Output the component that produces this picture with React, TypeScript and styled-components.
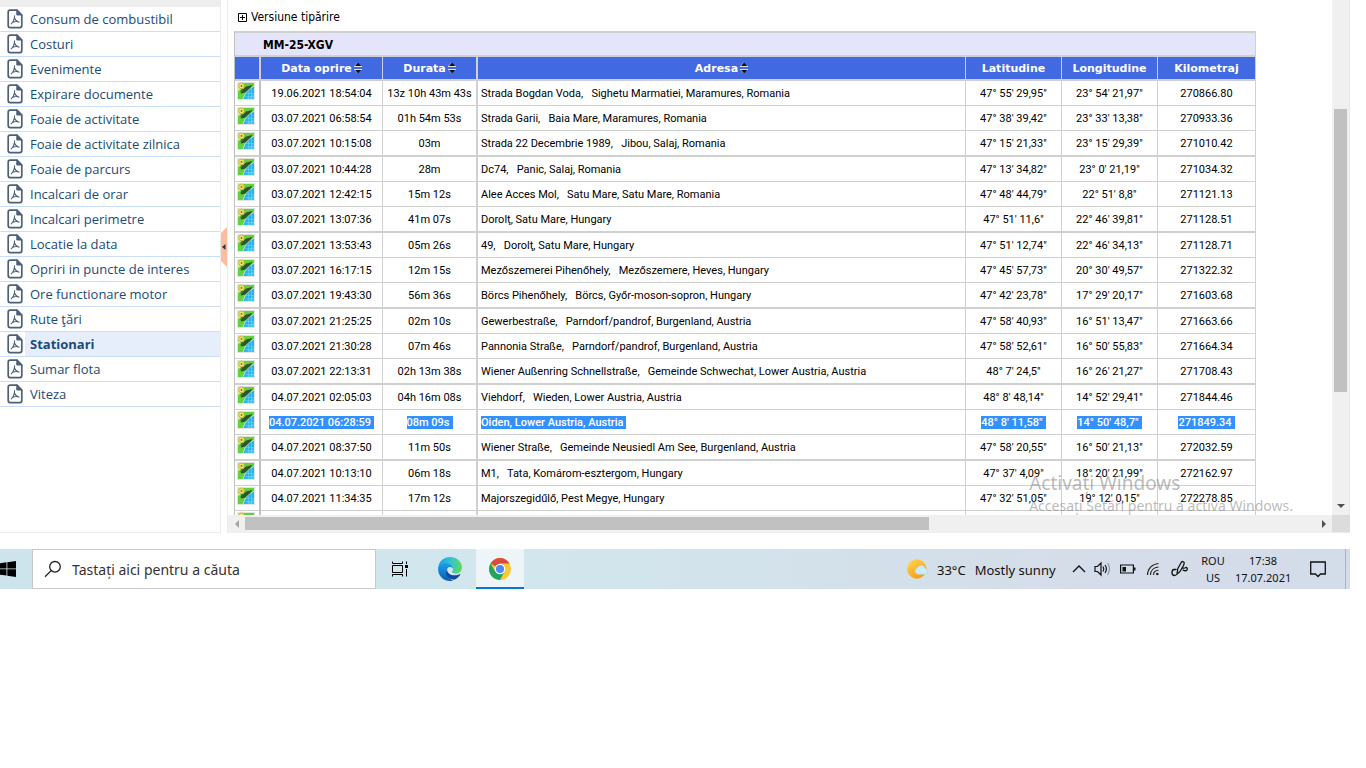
import React from "react";
import styled, { createGlobalStyle, css } from "styled-components";

const tableFont = 'Roboto, "DejaVu Sans Condensed", "Noto Sans", sans-serif';
const labelFont = '"DejaVu Sans Condensed", "DejaVu Sans", "Noto Sans", sans-serif';
const uiFont = '"Noto Sans", "Open Sans", sans-serif';

const GlobalStyle = createGlobalStyle`
  * { box-sizing: border-box; }
  body { margin: 0; background: #fff; font-family: ${labelFont}; color: #000; }
  button { border: 0; padding: 0; background: none; font: inherit; color: inherit; cursor: pointer; }
`;

const Screen = styled.div`
  margin-right: 16px;
  min-width: 1000px;
`;

const Workspace = styled.div`
  position: relative;
  display: flex;
  height: calc(100vh - 235px);
  min-height: 420px;
`;

const Sidebar = styled.nav`
  flex: 0 0 221px;
  border-right: 1px solid #ececec;
  border-bottom: 1px solid #ececec;
  overflow: hidden;
`;

const SidebarCap = styled.div`
  height: 7px;
  background: #eee;
`;

const ReportList = styled.ul`
  list-style: none;
  margin: 0;
  padding: 0;
`;

const ReportItem = styled.li`
  border-bottom: 1px solid #c9defa;
`;

const ReportLink = styled.a<{ $active?: boolean }>`
  display: flex;
  align-items: center;
  height: 24px;
  padding-left: 7px;
  color: #1c4b75;
  font: 13px/24px "Open Sans", "Noto Sans", sans-serif;
  text-decoration: none;
  ${(p) => p.$active && css`
    font-weight: 700;
    background: linear-gradient(to right, #fff 25px, #e6eefb 25px);
  `}
  svg { flex: none; margin-right: 7px; }
`;

const Splitter = styled.div`
  flex: 0 0 6px;
  display: flex;
  align-items: center;
  padding-bottom: 40px;
`;

const CollapseButton = styled.button`
  width: 6px;
  height: 40px;
  display: block;
  svg { display: block; }
`;

const Main = styled.main`
  flex: 1;
  min-width: 0;
  display: grid;
  grid-template-columns: minmax(0, 1fr) 18px;
  grid-template-rows: minmax(0, 1fr) 18px;
  border-left: 1px solid #ececec;
`;

const Report = styled.section`
  overflow: hidden;
  padding: 10px 76px 0 6px;
`;

const PrintToggle = styled.button`
  display: flex;
  align-items: center;
  gap: 4px;
  height: 14px;
  margin: 0 0 7px 4px;
  font: 12px/14px ${labelFont};
`;

const Table = styled.table`
  width: 100%;
  table-layout: fixed;
  border-collapse: separate;
  border-spacing: 0;
  border-top: 2px solid #d0d0d0;
  border-left: 1px solid #c0c0c0;
  font: 11px/14px ${tableFont};
`;

const Col = styled.col<{ $w?: number }>`
  ${(p) => p.$w && `width: ${p.$w}px;`}
`;

const VehicleCell = styled.th`
  height: 24px;
  padding: 1px 0 0 28px;
  text-align: left;
  font: 700 12px/20px ${labelFont};
  background: #e4e4fa;
  border-right: 1px solid #d0d0d0;
  border-bottom: 2px solid #d0d0d0;
`;

const HeadCell = styled.th<{ $thick?: boolean }>`
  height: 24px;
  padding: 2px 0 0;
  background: #4169e1;
  color: #fff;
  font: 700 11px/14px "DejaVu Sans", sans-serif;
  border-right: ${(p) => (p.$thick ? 2 : 1)}px solid #d0d0d0;
  border-bottom: 2px solid #d0d0d0;
`;

const SortButton = styled.button`
  display: inline-flex;
  align-items: flex-start;
  gap: 2px;
  height: 14px;
  vertical-align: top;
`;

const Cell = styled.td<{ $thick?: boolean; $left?: boolean }>`
  padding: ${(p) => (p.$left ? "2px 0 0 3px" : "2px 0 0")};
  text-align: ${(p) => (p.$left ? "left" : "center")};
  white-space: pre;
  overflow: hidden;
  border-right: ${(p) => (p.$thick ? 2 : 1)}px solid #d0d0d0;
  border-bottom: 1px solid #d0d0d0;
`;

const MapCell = styled(Cell)`
  vertical-align: top;
  padding: 1px 0 0 2px;
  text-align: left;
  border-right-color: #c0c0c0;
`;

const Row = styled.tr`
  height: 25px;
  &:nth-child(3n) { height: 26px; }
  &:nth-child(3n) td { border-bottom-width: 2px; }
`;

const MapButton = styled.button`
  display: block;
  width: 18px;
  height: 18px;
  svg { display: block; }
`;

const Value = styled.span<{ $selected?: boolean }>`
  ${(p) => p.$selected && css`
    display: inline-block;
    height: 13px;
    line-height: 14px;
    padding-right: 3px;
    background: #3390ff;
    color: #fff;
    font-weight: 500;
    vertical-align: top;
  `}
`;

const VerticalBar = styled.div`
  display: flex;
  flex-direction: column;
  align-items: center;
  background: #f0f0f0;
  border-right: 1px solid #e8e8e8;
`;

const VerticalThumb = styled.div`
  width: 13px;
  height: 55%;
  margin: 109px 0 auto;
  background: #c1c1c1;
`;

const HorizontalBar = styled.div`
  display: flex;
  align-items: center;
  background: #f0f0f0;
  padding-bottom: 1px;
`;

const HorizontalThumb = styled.div`
  width: 62%;
  height: 13px;
  margin-right: auto;
  background: #c1c1c1;
`;

const ScrollArrow = styled.button`
  flex: none;
  width: 17px;
  height: 18px;
  display: grid;
  place-items: center;
`;

const Corner = styled.div`
  background: #dcdcdc;
  border-bottom: 1px solid #ececec;
`;

const Watermark = styled.div`
  position: absolute;
  right: 57px;
  bottom: 17px;
  color: rgba(120, 120, 120, 0.5);
  font-family: ${uiFont};
  pointer-events: none;
`;

const WatermarkTitle = styled.div`
  font-size: 19px;
  line-height: 26px;
`;

const WatermarkText = styled.div`
  font-size: 14px;
  line-height: 20px;
`;

const Taskbar = styled.footer`
  display: flex;
  height: 40px;
  margin-top: 16px;
  background: linear-gradient(to right, #cde4ec, #d2e6ed 40%, #d3e0ea 65%, #d6dce9 85%, #d3dce9);
  font-family: ${uiFont};
`;

const StartButton = styled.button`
  width: 32px;
  display: flex;
  align-items: center;
`;

const SearchBox = styled.label`
  display: flex;
  align-items: center;
  width: 344px;
  padding-left: 11px;
  background: #fff;
  border: 1px solid #c8c8c8;
`;

const SearchInput = styled.input`
  flex: 1;
  min-width: 0;
  margin-left: 10px;
  padding: 2px 0 0;
  border: 0;
  outline: 0;
  background: none;
  font: 14px/20px ${uiFont};
  &::placeholder { color: #333; opacity: 1; }
`;

const TaskButton = styled.button<{ $active?: boolean; $w?: number }>`
  width: ${(p) => p.$w ?? 48}px;
  display: grid;
  place-items: center;
  ${(p) => p.$active && css`
    background: #edf5f9;
    box-shadow: inset 0 -2px #0078d7;
  `}
`;

const Tray = styled.div`
  display: flex;
  align-items: center;
  margin-left: auto;
  color: #111;
`;

const Weather = styled.button`
  display: flex;
  align-items: center;
  gap: 9px;
  width: 162px;
  font-size: 13px;
  line-height: 20px;
  white-space: nowrap;
`;

const WeatherText = styled.span`
  padding-top: 2px;
`;

const TrayButton = styled.button<{ $w: number }>`
  width: ${(p) => p.$w}px;
  display: grid;
  place-items: center;
  text-align: center;
  font-size: 11px;
  line-height: 17px;
`;

const ShowDesktop = styled.button`
  align-self: stretch;
  width: 5px;
  border-left: 1px solid #a8b2c0;
`;

const PdfIcon = () => (
  <svg width="16" height="20" viewBox="0 0 16 20" fill="none" stroke="#4d6076" strokeLinecap="round" strokeLinejoin="round" aria-hidden="true">
    <path d="M10 1.2H3.2Q1.2 1.2 1.2 3.2V16.6Q1.2 18.6 3.2 18.6H12.8Q14.8 18.6 14.8 16.6V6Z" strokeWidth="1.7" />
    <path d="M9.8 1.2V6H14.8Z" fill="#4d6076" strokeWidth="1" />
    <path d="M7.6 6.8C7.5 10 6.800 12.600 4.200 14.800M7.600 9.200C8.200 11.200 9.400 12.400 12 13.200M5.800 13.200C7.800 12.300 9.800 12.200 12 13" strokeWidth="1.1" />
  </svg>
);

const MapIcon = () => (
  <svg width="18" height="18" viewBox="0 0 18 18" aria-hidden="true">
    <rect width="18" height="18" fill="#e2e4e2" />
    <rect x="1" y="1" width="16" height="16" fill="#62d13c" />
    <path d="M17 4 12.500 7 8.500 11 6 17H17Z" fill="#27b1ee" />
    <path d="M8 17H17V12Z" fill="#3cc3f5" />
    <path d="M15.500 3 9 4.500 3.500 9 4 11.500 9 10.500 13 7Z" fill="#2c5a2c" />
    <path d="M17 4 12.500 7 8.500 11 6 17" fill="none" stroke="#c8f5f0" strokeWidth=".8" />
    <path d="M9.500 11.500H17M8.500 14.500H17M11.500 9V17M14.500 6.500V17" stroke="#6fd4fa" strokeWidth=".6" />
    <path d="M1 1H7V6L1 9Z" fill="#d5e89a" />
    <path d="M4.500 6.500V9.500" stroke="#6d6c24" strokeWidth="1.200" />
    <circle cx="4.500" cy="3.900" r="2.900" fill="#eee56a" stroke="#b5ac3c" strokeWidth=".8" />
    <circle cx="4.500" cy="3.900" r=".9" fill="#77701a" />
  </svg>
);

const SortIcon = () => (
  <svg width="8" height="12" viewBox="0 0 8 12" aria-hidden="true">
    <path d="M4 .5 7 4H1ZM4 11.500 1 8H7Z" fill="#111" />
    <path d="M0 4.500H8M0 7.500H8" stroke="#e4e0d4" />
    <path d="M3.500 .5 .5 4M.8 8 3.600 11.300" stroke="#cfcabc" strokeWidth=".6" />
  </svg>
);

const PlusBox = () => (
  <svg width="9" height="9" viewBox="0 0 9 9" fill="none" stroke="#000" aria-hidden="true">
    <path d="M.5.5H8.5V8.5H.5ZM2 4.5H7M4.5 2V7" />
  </svg>
);

const Triangle = ({ d, color = "#505050" }: { d: string; color?: string }) => (
  <svg width="8" height="8" viewBox="0 0 8 8" aria-hidden="true"><path d={d} fill={color} /></svg>
);

const WindowsLogo = () => (
  <svg width="16" height="16" viewBox="0 0 16 16" aria-hidden="true">
    <path d="M0 2.2 6.5 1.3V7.5H0ZM7.3 1.2 16 0V7.5H7.3ZM0 8.3H6.5V14.6L0 13.7ZM7.3 8.3H16V16L7.3 14.7Z" />
  </svg>
);

const SearchIcon = () => (
  <svg width="18" height="18" viewBox="0 0 18 18" fill="none" stroke="#222" strokeWidth="1.3" aria-hidden="true">
    <circle cx="11" cy="6.8" r="5.3" /><path d="M7.2 10.6 1 16.8" />
  </svg>
);

const TaskViewIcon = () => (
  <svg width="18" height="16" viewBox="0 0 18 16" fill="none" stroke="#000" aria-hidden="true">
    <path d="M1.5.5V2.5H11.5V.5M1.5 15.5V13.5H11.5V15.5M1.5 4.5H11.5V11.5H1.5ZM15.5.5V3M15.5 8V15.5" />
    <path d="M14 4H17V7H14Z" fill="#000" stroke="none" />
  </svg>
);

const EdgeIcon = () => (
  <svg width="24" height="24" viewBox="0 0 24 24" aria-hidden="true">
    <defs>
      <linearGradient id="edgeTop" x1="0" y1=".4" x2="1" y2=".5"><stop stopColor="#1e9fe0" /><stop offset=".55" stopColor="#35c6cf" /><stop offset="1" stopColor="#62d957" /></linearGradient>
      <linearGradient id="edgeLeft" x1="0" y1="0" x2="0" y2="1"><stop stopColor="#1ca0e5" /><stop offset="1" stopColor="#0a5cb6" /></linearGradient>
    </defs>
    <path d="M.3 10.2C1.1 4.2 6 0 12 0c7 0 12 5 12 10.500 0 3.500-2.500 6-6 6-2.500 0-4-.8-4-1.600 0-.6 1-1.100 1-3C15 9 12.400 7 9 7 5 7 1.200 9.200.3 12Z" fill="url(#edgeTop)" />
    <path d="M.1 12C.2 8.500 4 6.300 8 6.300c4 0 7 2.300 7 5.400-.6-1-1.700-1.700-3-1.700-4 0-6 8.500 3 13.700C7.500 25.300 0 20 .1 12Z" fill="url(#edgeLeft)" />
    <path d="M9 12.500C6.500 17.500 10 22 16 22.800c2.500-.9 5-2.900 6.200-5 .3-.6-.2-.9-.7-.6C15 20 9.500 17.500 9 12.500Z" fill="#11489b" />
  </svg>
);

const ChromeIcon = () => (
  <svg width="24" height="24" viewBox="0 0 24 24" aria-hidden="true">
    <circle cx="12" cy="12" r="11" fill="#fbc934" />
    <path d="M12 12 2.500 6.500A11 11 0 0 1 21.500 6.500H12Z" fill="#dc4b3e" />
    <path d="M2.500 6.500A11 11 0 0 0 12 23L16.500 14.600 12 12 7.300 14.600Z" fill="#1ea362" />
    <circle cx="12" cy="12" r="5.300" fill="#fff" />
    <circle cx="12" cy="12" r="4.100" fill="#4c8bf5" />
  </svg>
);

const WeatherIcon = () => (
  <svg width="21" height="20" viewBox="0 0 21 20" aria-hidden="true">
    <defs><linearGradient id="sun" x1="0" y1="0" x2=".7" y2="1"><stop stopColor="#ffd957" /><stop offset="1" stopColor="#f79b10" /></linearGradient></defs>
    <circle cx="9.800" cy="10" r="9.700" fill="url(#sun)" />
    <path d="M11 15.300a3.400 3.400 0 0 1-.5-6.600 4.300 4.300 0 0 1 7.900.8 3 3 0 0 1-.2 5.800Z" fill="#cdeaf9" stroke="#a7d7ef" strokeWidth=".6" />
  </svg>
);

const ChevronIcon = () => (
  <svg width="14" height="8" viewBox="0 0 14 8" fill="none" stroke="#111" strokeWidth="1.400" aria-hidden="true"><path d="M1 7 7 1 13 7" /></svg>
);

const SpeakerIcon = () => (
  <svg width="18" height="16" viewBox="0 0 18 16" fill="none" stroke="#111" strokeWidth="1.200" aria-hidden="true">
    <path d="M1 5.500H3.500L7 2V14L3.500 10.500H1ZM9 5.500Q10.600 8 9 10.500M11 4Q13.800 8 11 12" />
    <path d="M13.500 2Q17.500 8 13.500 14" stroke="#8c949e" />
  </svg>
);

const BatteryIcon = () => (
  <svg width="16" height="10" viewBox="0 0 16 10" aria-hidden="true">
    <path d="M.6 1H13.400V9H.6Z" fill="none" stroke="#111" strokeWidth="1.200" /><path d="M2.500 3H6V7.500H2.500ZM14 3.500H15.500V6.500H14Z" fill="#111" />
  </svg>
);

const WifiIcon = () => (
  <svg width="14" height="14" viewBox="0 0 14 14" fill="none" stroke="#222" strokeWidth="1.100" aria-hidden="true">
    <path d="M1.500 13C1.500 7 6 2 12.500 1.500M4.500 13C4.500 8.500 8 5.500 12.500 5M7.500 13C7.500 10.500 9.500 8.500 12.500 8.300" />
    <circle cx="11.300" cy="12" r="1.300" fill="#222" stroke="none" />
  </svg>
);

const PenIcon = () => (
  <svg width="17" height="18" viewBox="0 0 17 18" fill="none" stroke="#111" strokeWidth="1.300" strokeLinejoin="round" strokeLinecap="round" aria-hidden="true">
    <path d="M6 14 6.800 8.500 10.500 2Q12 .8 13.200 2.500L12.800 5 9 11.500ZM5 9.500H3Q1 9.800 1 12.500 1 15.500 3.500 15.500 5 15.500 6 14M11.500 8Q13.800 8.500 15 7.500 16.800 7.500 16 10 14.500 11.500 12 10" />
  </svg>
);

const NoticeIcon = () => (
  <svg width="16" height="17" viewBox="0 0 16 17" fill="none" stroke="#111" strokeWidth="1.300" aria-hidden="true">
    <path d="M.7 1H15.300V13H10.500L8 15.500 5.500 13H.7Z" />
  </svg>
);

const reports = [
  "Consum de combustibil", "Costuri", "Evenimente", "Expirare documente", "Foaie de activitate",
  "Foaie de activitate zilnica", "Foaie de parcurs", "Incalcari de orar", "Incalcari perimetre",
  "Locatie la data", "Opriri in puncte de interes", "Ore functionare motor", "Rute ţări",
  "Stationari", "Sumar flota", "Viteza",
];

const columns = [
  { label: "Data oprire", sort: true, thick: false },
  { label: "Durata", sort: true, thick: true },
  { label: "Adresa", sort: true, thick: false },
  { label: "Latitudine", sort: false, thick: false },
  { label: "Longitudine", sort: false, thick: false },
  { label: "Kilometraj", sort: false, thick: false },
];

const selectedStop = 13;

const stops: string[][] = [
  ["19.06.2021 18:54:04", "13z 10h 43m 43s", "Strada Bogdan Voda,   Sighetu Marmatiei, Maramures, Romania", "47° 55' 29,95\"", "23° 54' 21,97\"", "270866.80"],
  ["03.07.2021 06:58:54", "01h 54m 53s", "Strada Garii,   Baia Mare, Maramures, Romania", "47° 38' 39,42\"", "23° 33' 13,38\"", "270933.36"],
  ["03.07.2021 10:15:08", "03m", "Strada 22 Decembrie 1989,   Jibou, Salaj, Romania", "47° 15' 21,33\"", "23° 15' 29,39\"", "271010.42"],
  ["03.07.2021 10:44:28", "28m", "Dc74,   Panic, Salaj, Romania", "47° 13' 34,82\"", "23° 0' 21,19\"", "271034.32"],
  ["03.07.2021 12:42:15", "15m 12s", "Alee Acces Mol,   Satu Mare, Satu Mare, Romania", "47° 48' 44,79\"", "22° 51' 8,8\"", "271121.13"],
  ["03.07.2021 13:07:36", "41m 07s", "Dorolţ, Satu Mare, Hungary", "47° 51' 11,6\"", "22° 46' 39,81\"", "271128.51"],
  ["03.07.2021 13:53:43", "05m 26s", "49,   Dorolţ, Satu Mare, Hungary", "47° 51' 12,74\"", "22° 46' 34,13\"", "271128.71"],
  ["03.07.2021 16:17:15", "12m 15s", "Mezőszemerei Pihenőhely,   Mezőszemere, Heves, Hungary", "47° 45' 57,73\"", "20° 30' 49,57\"", "271322.32"],
  ["03.07.2021 19:43:30", "56m 36s", "Börcs Pihenőhely,   Börcs, Győr-moson-sopron, Hungary", "47° 42' 23,78\"", "17° 29' 20,17\"", "271603.68"],
  ["03.07.2021 21:25:25", "02m 10s", "Gewerbestraße,   Parndorf/pandrof, Burgenland, Austria", "47° 58' 40,93\"", "16° 51' 13,47\"", "271663.66"],
  ["03.07.2021 21:30:28", "07m 46s", "Pannonia Straße,   Parndorf/pandrof, Burgenland, Austria", "47° 58' 52,61\"", "16° 50' 55,83\"", "271664.34"],
  ["03.07.2021 22:13:31", "02h 13m 38s", "Wiener Außenring Schnellstraße,   Gemeinde Schwechat, Lower Austria, Austria", "48° 7' 24,5\"", "16° 26' 21,27\"", "271708.43"],
  ["04.07.2021 02:05:03", "04h 16m 08s", "Viehdorf,   Wieden, Lower Austria, Austria", "48° 8' 48,14\"", "14° 52' 29,41\"", "271844.46"],
  ["04.07.2021 06:28:59", "08m 09s", "Oiden, Lower Austria, Austria", "48° 8' 11,58\"", "14° 50' 48,7\"", "271849.34"],
  ["04.07.2021 08:37:50", "11m 50s", "Wiener Straße,   Gemeinde Neusiedl Am See, Burgenland, Austria", "47° 58' 20,55\"", "16° 50' 21,13\"", "272032.59"],
  ["04.07.2021 10:13:10", "06m 18s", "M1,   Tata, Komárom-esztergom, Hungary", "47° 37' 4,09\"", "18° 20' 21,99\"", "272162.97"],
  ["04.07.2021 11:34:35", "17m 12s", "Majorszegidűlő, Pest Megye, Hungary", "47° 32' 51,05\"", "19° 12' 0,15\"", "272278.85"],
  ["", "", "", "", "", ""],
];

export default function App() {
  return (
    <>
      <GlobalStyle />
      <Screen>
        <Workspace>
          <Sidebar>
            <SidebarCap />
            <ReportList>
              {reports.map((name) => (
                <ReportItem key={name}>
                  <ReportLink href="#" $active={name === "Stationari"}><PdfIcon />{name}</ReportLink>
                </ReportItem>
              ))}
            </ReportList>
          </Sidebar>
          <Splitter>
            <CollapseButton aria-label="Collapse panel">
              <svg width="6" height="40" viewBox="0 0 6 40"><path d="M6 0V40L0 34V6Z" fill="#fbbca2" /><path d="M4.500 17V23L1 20Z" fill="#333" /></svg>
            </CollapseButton>
          </Splitter>
          <Main>
            <Report>
              <PrintToggle><PlusBox />Versiune tipărire</PrintToggle>
              <Table>
                <colgroup>
                  <Col $w={26} /><Col $w={122} /><Col $w={95} /><Col /><Col $w={96} /><Col $w={96} /><Col $w={98} />
                </colgroup>
                <thead>
                  <tr><VehicleCell colSpan={7}>MM-25-XGV</VehicleCell></tr>
                  <tr>
                    <HeadCell $thick />
                    {columns.map((c) => (
                      <HeadCell key={c.label} $thick={c.thick}>
                        {c.sort ? <SortButton>{c.label}<SortIcon /></SortButton> : c.label}
                      </HeadCell>
                    ))}
                  </tr>
                </thead>
                <tbody>
                  {stops.map((stop, i) => (
                    <Row key={i}>
                      <MapCell $thick><MapButton aria-label="Map"><MapIcon /></MapButton></MapCell>
                      {stop.map((text, j) => (
                        <Cell key={j} $thick={columns[j].thick} $left={j === 2}>
                          <Value $selected={i === selectedStop}>{text}</Value>
                        </Cell>
                      ))}
                    </Row>
                  ))}
                </tbody>
              </Table>
            </Report>
            <VerticalBar>
              <VerticalThumb />
              <ScrollArrow aria-label="Scroll down"><Triangle d="M0 2H8L4 6Z" /></ScrollArrow>
            </VerticalBar>
            <HorizontalBar>
              <ScrollArrow aria-label="Scroll left"><Triangle d="M6 0V8L2 4Z" color="#a3a3a3" /></ScrollArrow>
              <HorizontalThumb />
              <ScrollArrow aria-label="Scroll right"><Triangle d="M2 0V8L6 4Z" /></ScrollArrow>
            </HorizontalBar>
            <Corner />
          </Main>
          <Watermark>
            <WatermarkTitle>Activați Windows</WatermarkTitle>
            <WatermarkText>Accesați Setări pentru a activa Windows.</WatermarkText>
          </Watermark>
        </Workspace>
        <Taskbar>
          <StartButton aria-label="Start"><WindowsLogo /></StartButton>
          <SearchBox>
            <SearchIcon />
            <SearchInput aria-label="Search" placeholder="Tastați aici pentru a căuta" />
          </SearchBox>
          <TaskButton aria-label="Task view"><TaskViewIcon /></TaskButton>
          <TaskButton aria-label="Edge" $w={52}><EdgeIcon /></TaskButton>
          <TaskButton aria-label="Chrome" $active><ChromeIcon /></TaskButton>
          <Tray>
            <Weather><WeatherIcon /><WeatherText>33°C</WeatherText><WeatherText>Mostly sunny</WeatherText></Weather>
            <TrayButton $w={20} aria-label="Hidden icons"><ChevronIcon /></TrayButton>
            <TrayButton $w={28} aria-label="Volume"><SpeakerIcon /></TrayButton>
            <TrayButton $w={22} aria-label="Battery"><BatteryIcon /></TrayButton>
            <TrayButton $w={28} aria-label="Network"><WifiIcon /></TrayButton>
            <TrayButton $w={24} aria-label="Pen"><PenIcon /></TrayButton>
            <TrayButton $w={44}><span>ROU</span><span>US</span></TrayButton>
            <TrayButton $w={56}><span>17:38</span><span>17.07.2021</span></TrayButton>
            <TrayButton $w={54} aria-label="Notifications"><NoticeIcon /></TrayButton>
            <ShowDesktop aria-label="Show desktop" />
          </Tray>
        </Taskbar>
      </Screen>
    </>
  );
}
